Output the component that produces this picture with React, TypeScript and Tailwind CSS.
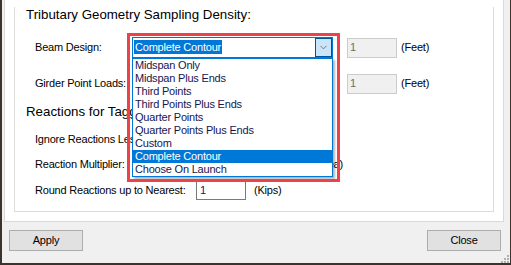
import { ChevronDown } from 'lucide-react'

const ITEMS = [
  'Midspan Only',
  'Midspan Plus Ends',
  'Third Points',
  'Third Points Plus Ends',
  'Quarter Points',
  'Quarter Points Plus Ends',
  'Custom',
  'Complete Contour',
  'Choose On Launch',
]

const SELECTED = 'Complete Contour'

function TextBox({ value, disabled }: { value: string; disabled?: boolean }) {
  return (
    <div
      className={
        disabled
          ? 'flex h-[20px] w-[50px] items-center border border-[#cccccc] bg-[#f0f0f0] pl-[2px] text-[#6d6d6d]'
          : 'flex h-[20px] w-[50px] items-center border border-[#7a7a7a] bg-white pl-[3px] text-[#1b1464]'
      }
    >
      {value}
    </div>
  )
}

function ComboBox({ open, value }: { open?: boolean; value: string }) {
  return (
    <div
      className={
        'flex h-[21px] w-[201px] items-center border ' +
        (open ? 'border-[#0078d7] bg-white' : 'border-[#adadad] bg-[#e1e1e1]')
      }
    >
      <div className="flex-1 pl-[1px]">
        <span className={open ? 'bg-[#0078d7] px-[1px] py-[1px] text-white' : ''}>{value}</span>
      </div>
      <div
        className={
          'flex h-[19px] w-[17px] items-center justify-center ' +
          (open ? 'border border-[#005499] bg-[#cce4f7]' : '')
        }
      >
        <ChevronDown size={11} strokeWidth={1.5} className="text-[#505050]" />
      </div>
    </div>
  )
}

export default function App() {
  return (
    <div className="relative h-[265px] w-[511px] overflow-hidden font-['Liberation_Sans',Arial,sans-serif] text-[11px] leading-[13px] tracking-[-0.2px] text-black">
      <div className="flex h-full flex-col border-b-2 border-l-2 border-r border-[#3a332e] bg-[#f0f0f0]">
        {/* Tab page */}
        <div className="ml-[2px] mr-[6px] border-x border-b border-[#d9d9d9] bg-white px-[9px] pb-[9px]">
          {/* Group box */}
          <div className="border-x border-b border-[#dcdcdc] pb-[10px] pl-[11px]">
            <div className="mt-[7px] text-[13.3px] leading-[16px] tracking-normal">
              Tributary Geometry Sampling Density:
            </div>

            <div className="mt-[14px] flex h-[21px] items-center pl-[9px]">
              <span className="w-[97px]">Beam Design:</span>
              <ComboBox open value={SELECTED} />
              <div className="ml-[14px]">
                <TextBox value="1" disabled />
              </div>
              <span className="ml-[4px]">(Feet)</span>
            </div>

            <div className="mt-[15px] flex h-[21px] items-center pl-[9px]">
              <span className="w-[97px]">Girder Point Loads:</span>
              <ComboBox value="Midspan Only" />
              <div className="ml-[14px]">
                <TextBox value="1" disabled />
              </div>
              <span className="ml-[4px]">(Feet)</span>
            </div>

            <div className="mt-[10px] text-[13.3px] leading-[16px] tracking-normal">
              Reactions for Tagged Beams:
            </div>

            <div className="mt-[8px] flex h-[22px] items-center pl-[9px]">
              <span className="w-[161px]">Ignore Reactions Less Than:</span>
              <TextBox value="0" />
              <span className="ml-[8px]">(Kips)</span>
            </div>

            <div className="mt-[3px] flex h-[22px] items-center pl-[9px]">
              <span className="w-[161px]">Reaction Multiplier:</span>
              <TextBox value="1" />
              <span className="ml-[8px] w-[89px] text-right">(Factor per Area)</span>
            </div>

            <div className="mt-[4px] flex h-[22px] items-center pl-[9px]">
              <span className="w-[161px]">Round Reactions up to Nearest:</span>
              <TextBox value="1" />
              <span className="ml-[8px]">(Kips)</span>
            </div>
          </div>
        </div>

        {/* Buttons */}
        <div className="ml-[7px] mr-[9px] mt-[8px] flex justify-between">
          <button className="h-[21px] w-[74px] border border-[#adadad] bg-[#e1e1e1] text-center">Apply</button>
          <button className="h-[21px] w-[74px] border border-[#adadad] bg-[#e1e1e1] text-center">Close</button>
        </div>
      </div>

      {/* Dropdown list */}
      <div className="absolute left-[132px] top-[58px] w-[201px] border border-[#0078d7] bg-white shadow-[2px_2px_2px_rgba(0,0,0,0.3)]">
        {ITEMS.map((item) => (
          <div
            key={item}
            className={
              'h-[13px] pl-[2px] leading-[13px] ' +
              (item === SELECTED ? 'bg-[#0078d7] text-white' : 'text-[#161650]')
            }
          >
            {item}
          </div>
        ))}
      </div>

      {/* Highlight annotation */}
      <div className="absolute left-[127px] top-[33px] h-[149px] w-[213px] border-[3px] border-[#ee4249]" />

      {/* Resize grip */}
      <svg className="absolute left-[500px] top-[255px]" width="9" height="8" viewBox="0 0 9 8">
        <rect x="7" y="0" width="2" height="2" fill="#b0b0b0" />
        <rect x="4" y="3" width="2" height="2" fill="#b0b0b0" />
        <rect x="7" y="3" width="2" height="2" fill="#b0b0b0" />
        <rect x="1" y="6" width="2" height="2" fill="#b0b0b0" />
        <rect x="4" y="6" width="2" height="2" fill="#b0b0b0" />
        <rect x="7" y="6" width="2" height="2" fill="#b0b0b0" />
      </svg>
    </div>
  )
}
